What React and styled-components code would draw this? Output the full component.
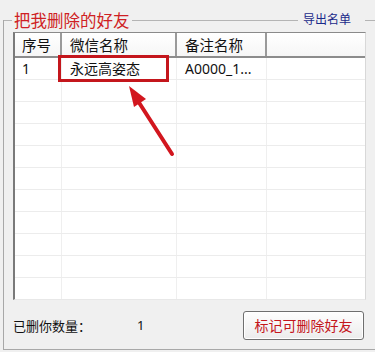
import React from "react";
import styled, { createGlobalStyle } from "styled-components";

const Global = createGlobalStyle`
  html, body { margin: 0; padding: 0; background: #f0f0f0; }
  body { font-family: "Noto Sans", "Noto Sans CJK SC", sans-serif; }
  #root { width: 375px; height: 352px; overflow: hidden; }
`;

const Page = styled.div`
  width: 375px;
  height: 352px;
  padding-top: 20px;
  box-sizing: border-box;
  background: #f0f0f0;
`;

const Frame = styled.div`
  margin-left: 3px;
  height: 330px;
  box-sizing: border-box;
  border-left: 1px solid #a8a8a8;
  border-bottom: 1px solid #a8a8a8;
  display: flex;
  flex-direction: column;
`;

const TitleRow = styled.div`
  margin-top: -11px;
  height: 22px;
  display: flex;
  align-items: center;
`;

const Line = styled.div`
  height: 1px;
  background: #b4b4b4;
  width: ${(p) => (p.$w ? `${p.$w}px` : "auto")};
  flex: ${(p) => (p.$grow ? 1 : "none")};
`;

const Title = styled.span`
  font-family: "Noto Sans CJK SC", sans-serif;
  font-size: 16.5px;
  line-height: 22px;
  color: #cf1f24;
  padding: 0 2px 0 2px;
`;

const Link = styled.span`
  font-family: "Noto Sans CJK SC", sans-serif;
  font-size: 12px;
  line-height: 22px;
  color: #1b2a8a;
  padding: 0 14px 0 5px;
  margin-top: -3px;
`;

const TableWrap = styled.div`
  position: relative;
  margin: 1px 0 0 9px;
  width: 353px;
  height: 268px;
  box-sizing: border-box;
  background: #ffffff;
  border-top: 1px solid #8a8a8a;
  border-left: 2px solid #7a7a7a;
  border-right: 1px solid #d8d8d8;
  border-bottom: 1px solid #e8e8e8;
  overflow: hidden;
`;

const cols = "47px 115px 90px 1fr";

const HeaderRow = styled.div`
  display: grid;
  grid-template-columns: ${cols};
  height: 23px;
  background: linear-gradient(#ffffff, #f6f6f6);
  border-bottom: 2px solid #8c8c8c;
`;

const HeadCell = styled.div`
  font-family: "Noto Sans CJK SC", sans-serif;
  font-size: 14.5px;
  line-height: 23px;
  color: #111;
  padding-left: ${(p) => p.$pl || 8}px;
  border-right: ${(p) => (p.$last ? "none" : "2px solid #9a9a9a")};
  white-space: nowrap;
`;

const Row = styled.div`
  display: grid;
  grid-template-columns: ${cols};
  height: 21px;
  border-bottom: 1px solid #ececec;
`;

const Cell = styled.div`
  font-family: "Noto Sans", "Noto Sans CJK SC", sans-serif;
  font-size: 14px;
  line-height: 21px;
  color: #111;
  padding-left: ${(p) => p.$pl || 8}px;
  border-right: ${(p) => (p.$last ? "none" : "1px solid #efefef")};
  white-space: nowrap;
  overflow: hidden;
`;

const Highlight = styled.div`
  position: absolute;
  left: 43px;
  top: 22px;
  width: 111px;
  height: 27px;
  box-sizing: border-box;
  border: 3px solid #c4161c;
  pointer-events: none;
`;

const Arrow = styled.svg`
  position: absolute;
  left: 107px;
  top: 48px;
  width: 55px;
  height: 78px;
  overflow: visible;
`;

const Footer = styled.div`
  flex: 1;
  display: flex;
  align-items: center;
  padding: 1px 0 0 9px;
`;

const Label = styled.span`
  font-family: "Noto Sans CJK SC", sans-serif;
  font-size: 13px;
  color: #111;
  width: 124px;
`;

const Count = styled.span`
  font-family: "Noto Sans", sans-serif;
  font-size: 13px;
  color: #111;
  flex: 1;
`;

const Button = styled.button`
  width: 121px;
  height: 29px;
  margin-right: 11px;
  border: 1px solid #6f6f6f;
  border-radius: 3px;
  background: linear-gradient(#fefefe, #ececec);
  box-shadow: inset 0 0 0 1px #ffffff;
  font-family: "Noto Sans CJK SC", sans-serif;
  font-size: 14px;
  color: #c4161c;
  padding: 0;
`;

const emptyRows = Array.from({ length: 10 });

export default function App() {
  return (
    <>
      <Global />
      <Page>
        <Frame>
          <TitleRow>
            <Line $w={8} />
            <Title>把我删除的好友</Title>
            <Line $grow />
            <Link>导出名单</Link>
            <Line $w={10} />
          </TitleRow>
          <TableWrap>
            <HeaderRow>
              <HeadCell $pl={7}>序号</HeadCell>
              <HeadCell>微信名称</HeadCell>
              <HeadCell>备注名称</HeadCell>
              <HeadCell $last />
            </HeaderRow>
            <Row>
              <Cell $pl={7}>1</Cell>
              <Cell>永远高姿态</Cell>
              <Cell>A0000_1...</Cell>
              <Cell $last />
            </Row>
            {emptyRows.map((_, i) => (
              <Row key={i}>
                <Cell />
                <Cell />
                <Cell />
                <Cell $last />
              </Row>
            ))}
            <Highlight />
            <Arrow viewBox="120 80 55 78">
              <line x1="170" y1="153" x2="136" y2="100" stroke="#d2161e" strokeWidth="4" strokeLinecap="round" />
              <polygon points="127,85 144,98 132,106" fill="#d2161e" />
            </Arrow>
          </TableWrap>
          <Footer>
            <Label>已删你数量：</Label>
            <Count>1</Count>
            <Button>标记可删除好友</Button>
          </Footer>
        </Frame>
      </Page>
    </>
  );
}
